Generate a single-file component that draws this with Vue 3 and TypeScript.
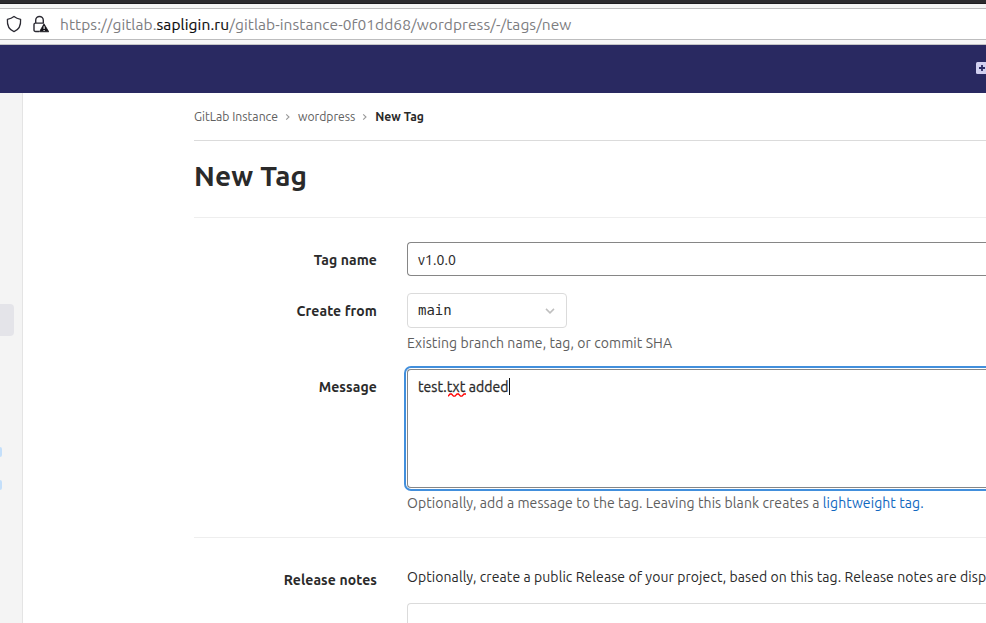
<script setup lang="ts">
import { ref } from 'vue'

const crumbs = ['GitLab Instance', 'wordpress']
const tagName = ref('v1.0.0')
const branch = ref('main')
</script>

<template>
  <div class="window">
    <div class="titlebar"></div>
    <div class="toolbar">
      <div class="urlbar">
        <svg class="shield" width="16" height="18" viewBox="0 0 16 18">
          <path d="M8 1.500 C6.200 3 3.900 3.900 1.400 4.300 C1 10.200 3.100 14.800 8 16.600 C12.900 14.800 15 10.200 14.600 4.300 C12.100 3.900 9.800 3 8 1.500Z" fill="none" stroke="#2b2a33" stroke-width="1.3" stroke-linejoin="round" />
        </svg>
        <svg class="lock" width="16" height="18" viewBox="0 -0.5 16 18">
          <path d="M2.7 8V4.8a3.8 3.8 0 0 1 7.6 0V8M6 16H2.6A1.6 1.6 0 0 1 1 14.400V9a1.400 1.400 0 0 1 1.400-1.400h8.200" fill="none" stroke="#2b2a33" stroke-width="1.400" />
          <path d="M11 8.300 15.800 16.300H6.400Z" fill="#15141a" stroke="#15141a" stroke-width=".7" stroke-linejoin="round" />
          <path d="M11.100 10.800v2.800M11.100 14.400v1.100" stroke="#fff" stroke-width="1.100" />
        </svg>
        <span class="url">https://gitlab.<b>sapligin.ru</b>/gitlab-instance-0f01dd68/wordpress/-/tags/new</span>
      </div>
    </div>
    <header class="navbar">
      <svg class="plus" width="12" height="12" viewBox="0 0 12 12">
        <rect width="16" height="12" rx="1.500" fill="#d1d0f0" />
        <path d="M6 3v6M3 6h6" stroke="#292961" stroke-width="1.800" />
      </svg>
    </header>
    <div class="body">
      <aside class="sidebar">
        <span class="active"></span>
        <span class="badge"></span>
        <span class="badge"></span>
      </aside>
      <main class="content">
        <nav class="crumbs">
          <template v-for="c in crumbs" :key="c">
            <a>{{ c }}</a>
            <svg class="sep" width="6" height="8" viewBox="0 0 6 8"><path d="M1.200 1.300 4 4 1.200 6.700" fill="none" stroke="#999" stroke-width="1.100" /></svg>
          </template>
          <strong>New Tag</strong>
        </nav>
        <h1>New Tag</h1>
        <form>
          <div class="row">
            <label>Tag name</label>
            <div class="input">{{ tagName }}</div>
          </div>
          <div class="row from">
            <label>Create from</label>
            <div class="field">
              <div class="select">
                <span>{{ branch }}</span>
                <svg width="10" height="6" viewBox="0 0 10 6"><path d="M1 .9 5 4.900 9 .9" fill="none" stroke="#bfbfbf" stroke-width="1.500" /></svg>
              </div>
              <p class="help">Existing branch name, tag, or commit SHA</p>
            </div>
          </div>
          <div class="row message">
            <label>Message</label>
            <div class="field">
              <div class="textarea">
                <span>test.</span><span class="typo">txt<svg width="18" height="4" viewBox="0 0 18 4"><path d="M0 3.200 L2 1 L3.500 1 L5.500 3.200 L7 3.200 L9 1 L10.500 1 L12.500 3.200 L14 3.200 L16 1 L18 1" fill="none" stroke="#f00" stroke-width="1.300" /></svg></span><span>&nbsp;added</span><i class="caret"></i>
              </div>
              <p class="help">Optionally, add a message to the tag. Leaving this blank creates a <a>lightweight tag.</a></p>
            </div>
          </div>
          <div class="row notes">
            <label>Release notes</label>
            <div class="field">
              <p class="intro">Optionally, create a public Release of your project, based on this tag. Release notes are disp</p>
              <div class="editor"></div>
            </div>
          </div>
        </form>
      </main>
    </div>
  </div>
</template>

<style>
body { margin: 0; overflow: hidden; }
</style>

<style scoped>
* { box-sizing: border-box; }
.window {
  width: 986px; height: 623px; overflow: hidden; display: flex; flex-direction: column;
  background: #fff; color: #2a2a2a; white-space: nowrap;
  font: 14px/20px Ubuntu, "Noto Sans", sans-serif; letter-spacing: .079px;
}
.titlebar { height: 4px; flex: none; background: #2c2b2e; border-bottom: 1px solid #1e1d20; }
.toolbar { height: 41px; flex: none; padding: 4px 0; background: #f5f5f5; border-bottom: 1px solid #c4c4c5; }
.urlbar { height: 32px; display: flex; align-items: center; padding-left: 6px; background: #fff; border: solid #bdbdbe; border-width: 1px 0; }
.lock { margin: 0 0 0 11px; }
.url { margin: 2px 0 0 11px; font-size: 15.5px; letter-spacing: .06px; color: #7d7d7f; line-height: 20px; }
.url b { font-weight: 400; color: #0c0c0d; letter-spacing: .1px; -webkit-text-stroke: .15px; }
.navbar { height: 48px; flex: none; background: #292961; display: flex; justify-content: flex-end; align-items: center; }
.plus { margin: 0 -2px 2px 0; }
.body { flex: 1; min-height: 0; display: flex; }
.sidebar { width: 23px; flex: none; background: #f4f4f4; border-right: 1px solid #e4e4e4; padding-top: 211px; }
.active { display: block; width: 14px; height: 32px; border-radius: 0 4px 4px 0; background: #e4e4e9; margin-bottom: 111px; }
.badge { display: block; width: 2px; height: 10px; border-radius: 0 2px 2px 0; background: #c4dffa; margin-bottom: 23px; }
.content { margin-left: 171px; width: 792px; flex: none; }
.crumbs { height: 48px; display: flex; align-items: center; border-bottom: 1px solid #dbdbdb; font-size: 12.2px; letter-spacing: 0; color: #606060; }
.crumbs .sep { margin: 1px 7px 0 7px; }
.crumbs strong { color: #2a2a2a; letter-spacing: -.03px; }
h1 { height: 77px; margin: 0; border-bottom: 1px solid #eee; font-size: 28px; line-height: 70px; font-weight: 700; letter-spacing: .15px; }
form { padding-top: 24px; }
.row { display: flex; }
label { width: 183px; flex: none; text-align: right; padding-top: 8px; font-weight: 700; margin-right: 30px; letter-spacing: .1px; }
.field, .input { flex: 1; min-width: 0; }
.input { height: 34px; border: 1px solid #868686; border-right: 0; border-radius: 4px 0 0 4px; padding: 7px 10px; -webkit-text-stroke: .1px; }
.from { margin-top: 17px; }
.select { width: 160px; height: 35px; display: flex; align-items: center; justify-content: space-between; padding: 0 11px 0 10px; border: 1px solid #dbdbdb; border-radius: 4px; font-family: "DejaVu Sans Mono", monospace; letter-spacing: 0; }
.select span { margin-bottom: 2px; }
.help { margin: 5px 0 0; color: #5e5e5e; }
.help a { color: #1068bf; letter-spacing: .09px; }
.message { margin-top: 16px; }
.textarea { height: 119px; display: flex; align-items: flex-start; padding: 7px 10px; border: 1px solid #868686; border-right: 0; border-radius: 4px 0 0 4px; box-shadow: 0 0 0 1px #fff, 0 0 0 3px #428fdc; -webkit-text-stroke: .3px; }
.typo { position: relative; }
.typo svg { position: absolute; left: 1px; top: 16px; }
.caret { width: 1px; height: 17px; margin-top: 1px; background: #111; }
.notes { margin-top: 24px; padding-top: 24px; border-top: 1px solid #eee; }
.intro { margin: 5px 0 16px; }
.editor { height: 60px; border: 1px solid #dbdbdb; border-right: 0; border-radius: 4px 0 0 0; }
</style>
